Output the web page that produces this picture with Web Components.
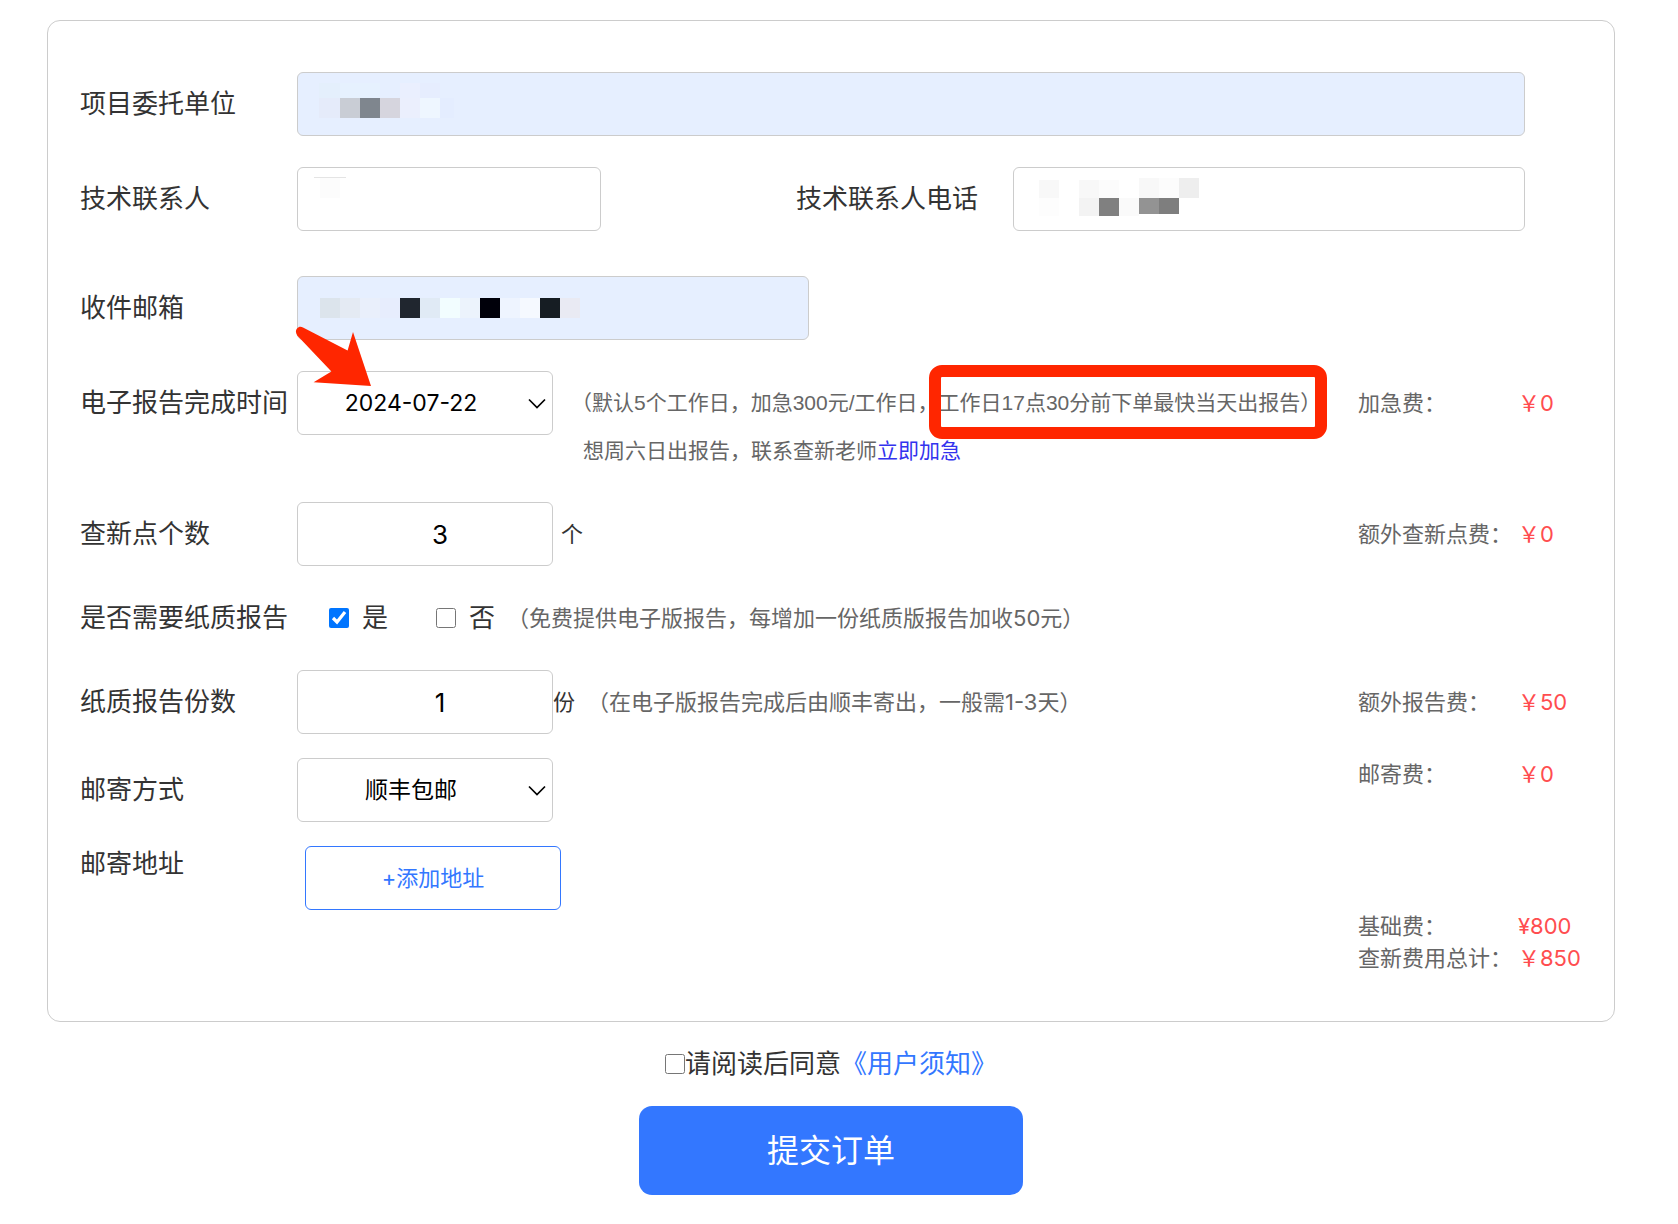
<!DOCTYPE html>
<html lang="zh-CN">
<head>
<meta charset="utf-8">
<meta name="viewport" content="width=device-width, initial-scale=1">
<title>提交订单</title>
<style>
  body {
    margin: 0;
    background: #fff;
    color: #333;
    font: 22px/32px Inter, "Noto Sans CJK SC", sans-serif;
    --line: #ccc;
    --blue: #3377ff;
    --mark: #ff2600;
    --label-size: 26px;
    --label-col: 217px;
  }
  order-page { padding: 20px 63px 28px 47px; }
  .gap-s { margin-top: 20px; }
  .gap-m { margin-top: 24px; }
  .gap-l { margin-top: 31px; }
  .gap-xl { margin-top: 45px; }
  .gap-xxl { margin-top: 27px; }
  .unit { margin-left: 8px; }
  .spaced { margin-left: 12px; }
  .spaced-l { margin-left: 18px; }
</style>
</head>
<body>
<order-page>
  <order-card>
    <form-row wide>
      <text-field label="项目委托单位" filled grow>
        <mosaic-mask kind="company"></mosaic-mask>
      </text-field>
    </form-row>
    <form-row class="gap-l" wide>
      <text-field label="技术联系人" size="s"><mosaic-mask kind="contact"></mosaic-mask></text-field>
      <text-field label="技术联系人电话" size="l" type="tel"><mosaic-mask kind="phone"></mosaic-mask></text-field>
    </form-row>
    <form-row class="gap-xl">
      <text-field label="收件邮箱" size="l" type="email" filled><mosaic-mask kind="mail"></mosaic-mask></text-field>
    </form-row>
    <form-row class="gap-l">
      <select-field label="电子报告完成时间" value="2024-07-22"><pointer-arrow></pointer-arrow></select-field>
      <deadline-hint class="spaced-l"></deadline-hint>
      <fee-item slot="fee" label="加急费：" amount="￥0"></fee-item>
    </form-row>
    <form-row class="gap-xxl">
      <number-field label="查新点个数" value="3"></number-field>
      <hint-text class="unit" dark>个</hint-text>
      <fee-item slot="fee" label="额外查新点费：" amount="￥0"></fee-item>
    </form-row>
    <form-row class="gap-s">
      <paper-choice></paper-choice>
      <hint-text class="spaced">（免费提供电子版报告，每增加一份纸质版报告加收50元）</hint-text>
    </form-row>
    <form-row class="gap-s">
      <number-field label="纸质报告份数" value="1"></number-field>
      <hint-text dark>份</hint-text>
      <hint-text class="spaced">（在电子版报告完成后由顺丰寄出，一般需1-3天）</hint-text>
      <fee-item slot="fee" label="额外报告费：" amount="￥50"></fee-item>
    </form-row>
    <form-row class="gap-m">
      <select-field label="邮寄方式" value="顺丰包邮"></select-field>
      <fee-item slot="fee" label="邮寄费：" amount="￥0" compact></fee-item>
    </form-row>
    <form-row class="gap-m">
      <address-field></address-field>
    </form-row>
    <fee-summary>
      <fee-item label="基础费：" amount="¥800" compact></fee-item>
      <fee-item label="查新费用总计：" amount="￥850" compact></fee-item>
    </fee-summary>
  </order-card>
  <agree-line></agree-line>
  <submit-button>提交订单</submit-button>
</order-page>

<script>
const base = `
  *, *::before, *::after { box-sizing: border-box; }
  :host { box-sizing: border-box; }
  :host([hidden]) { display: none; }
`;
const fieldCss = base + `
  :host { display: flex; align-items: flex-start; position: relative; }
  label, .label {
    flex: none; width: var(--label-col); line-height: 64px;
    font-size: var(--label-size); white-space: nowrap;
  }
  .box { position: relative; width: 256px; height: 64px; }
  input, select {
    display: block; width: 100%; height: 64px; margin: 0;
    border: 1px solid var(--line); border-radius: 6px;
    background: #fff; color: #000; font: inherit; outline-color: var(--blue);
  }
`;

function define(name, render) {
  customElements.define(name, class extends HTMLElement {
    constructor() { super(); this.attachShadow({ mode: 'open' }); }
    connectedCallback() {
      const get = (key) => this.getAttribute(key) || '';
      const t = document.createElement('template');
      t.innerHTML = render(get, this);
      this.shadowRoot.replaceChildren(t.content.cloneNode(true));
    }
  });
}

define('order-page', () => `<style>${base}
  :host { display: flex; flex-direction: column; }
</style><slot></slot>`);

define('order-card', () => `<style>${base}
  :host { display: block; }
  form { padding: 51px 32px 47px; border: 1px solid var(--line); border-radius: 13px; }
</style><form><slot></slot></form>`);

define('form-row', () => `<style>${base}
  :host { display: flex; align-items: flex-start; }
  .main { flex: 1; display: flex; align-items: flex-start; min-width: 0; }
  :host([wide]) .main { justify-content: space-between; padding-right: 57px; }
</style><div class="main"><slot></slot></div><slot name="fee"></slot>`);

define('text-field', (get) => `<style>${fieldCss}
  :host([grow]) { flex: 1; }
  :host([grow]) .box { flex: 1; }
  :host([size="s"]) .box { width: 304px; }
  :host([size="l"]) .box { width: 512px; }
  :host([filled]) input { background: #e6efff; }
  input { padding: 0 22px; }
</style><label for="control">${get('label')}</label>
<div class="box"><input id="control" type="${get('type') || 'text'}"><slot></slot></div>`);

define('number-field', (get) => `<style>${fieldCss}
  input { appearance: textfield; padding: 0 0 0 30px; font-size: var(--label-size); text-align: center; }
  input::-webkit-inner-spin-button { appearance: none; margin: 0; }
</style><label for="control">${get('label')}</label>
<div class="box"><input id="control" type="number" value="${get('value')}"></div>`);

define('select-field', (get) => `<style>${fieldCss}
  select { appearance: none; padding: 0 28px 0 0; font-size: 23px; text-align: center; text-align-last: center; }
  .chevron { position: absolute; right: 7px; top: 27px; pointer-events: none; }
</style><label for="control">${get('label')}</label>
<div class="box"><select id="control"><option>${get('value')}</option></select>
<svg class="chevron" width="18" height="12" viewBox="0 0 18 12" fill="none" stroke="#000" stroke-width="1.7" aria-hidden="true"><path d="M1 1.5 9 9.5 17 1.5"/></svg><slot></slot></div>`);

define('pointer-arrow', () => `<style>${base}
  :host { position: absolute; left: -2px; top: -45px; pointer-events: none; }
  svg { display: block; }
</style><svg width="78" height="62" viewBox="0 0 78 62" aria-hidden="true">
<path fill="#ff2600" d="M8 1.6 52.6 24.6 58 6 76 60 18.6 56.2 36.4 45.6 2.2 9.4C-.2 6 1 2.400 3.600 1.200 5 .6 6.700.8 8 1.600Z"/></svg>`);

define('hint-text', () => `<style>${base}
  :host { display: block; line-height: 64px; color: #666; white-space: nowrap; }
  :host([dark]) { color: #333; }
</style><slot></slot>`);

define('deadline-hint', () => `<style>${base}
  :host {
    display: block; padding-top: 8px; color: #666; white-space: nowrap;
    font: 21px/48px "Liberation Sans", "Noto Sans CJK SC", sans-serif;
  }
  p { margin: 0; }
  .second { padding-left: 12px; }
  .mark { position: relative; display: inline-block; }
  .mark::after {
    content: ""; position: absolute; inset: -14px -6px -12px -10px;
    border: 12px solid var(--mark); border-radius: 13px; pointer-events: none;
  }
  a { color: #3333ee; text-decoration: none; }
</style>
<p>（默认5个工作日，加急300元/工作日，<span class="mark">工作日17点30分前下单最快当天出报告）</span></p>
<p class="second">想周六日出报告，联系查新老师<a href="#urgent">立即加急</a></p>`);

define('fee-item', (get) => `<style>${base}
  :host { display: flex; flex: none; width: 224px; line-height: 64px; white-space: nowrap; color: #666; }
  :host([compact]) { line-height: 32px; }
  .name { width: 160px; }
  .amount { color: #ff4d4f; }
</style><span class="name">${get('label')}</span><span class="amount">${get('amount')}</span>`);

define('fee-summary', () => `<style>${base}
  :host { display: flex; flex-direction: column; align-items: flex-end; }
</style><slot></slot>`);

define('paper-choice', () => `<style>${base}
  :host { display: block; }
  .group { display: flex; align-items: center; line-height: 64px; font-size: var(--label-size); white-space: nowrap; }
  .title { width: var(--label-col); }
  .options { display: flex; gap: 48px; padding-left: 32px; }
  label { display: flex; align-items: center; gap: 13px; }
  input { width: 20px; height: 20px; margin: 0; accent-color: #0075ff; }
</style>
<div class="group" role="group" aria-labelledby="title">
  <span class="title" id="title">是否需要纸质报告</span>
  <div class="options">
    <label><input type="checkbox" checked>是</label>
    <label><input type="checkbox">否</label>
  </div>
</div>`);

define('address-field', () => `<style>${base}
  :host { display: flex; align-items: flex-start; }
  .title { width: var(--label-col); font-size: var(--label-size); line-height: 36px; }
  button {
    width: 256px; height: 64px; margin: 0 0 0 8px; padding: 0;
    border: 1px solid var(--blue); border-radius: 6px;
    background: #fff; color: var(--blue); font: inherit;
  }
</style><span class="title" id="title">邮寄地址</span><button type="button" aria-describedby="title">+添加地址</button>`);

define('agree-line', () => `<style>${base}
  :host { display: flex; justify-content: center; margin-top: 24px; font-size: var(--label-size); line-height: 36px; }
  label { display: flex; align-items: center; }
  input { width: 20px; height: 20px; margin: 0; }
  a { color: var(--blue); text-decoration: none; }
</style><label><input type="checkbox">请阅读后同意</label><a href="#notice">《用户须知》</a>`);

define('submit-button', () => `<style>${base}
  :host { display: flex; justify-content: center; margin-top: 24px; }
  button {
    width: 384px; height: 89px; padding: 0; border: 0; border-radius: 13px;
    background: var(--blue); color: #fff; font: inherit; font-size: 32px;
  }
</style><button type="submit"><slot></slot></button>`);

/* Blocks that hide private values: [x, y, width, height, colour] */
const masks = {
  company: [[22,11,21,15,'#e4effc'],[43,11,40,15,'#e6f1fe'],[103,11,20,15,'#eaeffe'],[123,11,20,15,'#e6edfe'],
    [22,26,21,20,'#e5ebfa'],[43,26,20,20,'#c9cdd5'],[63,26,20,20,'#7f868e'],[83,26,20,20,'#d6d5de'],
    [103,26,20,20,'#ebeffd'],[123,26,20,20,'#eef6ff'],[143,26,14,20,'#e4edff']],
  contact: [[17,10,32,1,'#e4e4e4'],[23,11,20,20,'#fcfcfc']],
  phone: [[26,13,20,18,'#f8f8f8'],[66,13,20,18,'#f8f8f8'],[86,13,20,18,'#fcfcfc'],[126,11,20,20,'#f8f8f8'],
    [146,11,20,20,'#fcfcfc'],[166,11,20,20,'#eeeeee'],[26,31,20,18,'#fdfdfd'],[66,31,20,18,'#f3f3f3'],
    [86,31,20,18,'#808080'],[106,31,20,18,'#fafafa'],[126,31,20,16,'#939393'],[146,31,20,16,'#7e7e7e']],
  mail: ['#dce4ec','#e4eaf3','#e9effb','#e7edfd','#20262f','#e0eaf5','#f2fdff','#ecf3fc','#00000a','#eef4ff','#f5f9ff','#161d23','#e9eaf3']
    .map((c, i) => [23 + i * 20, 22, 20, 20, c])
};
define('mosaic-mask', (get) => `<style>${base}
  :host { position: absolute; left: 0; top: 0; pointer-events: none; }
  svg { display: block; }
</style><svg width="290" height="60" shape-rendering="crispEdges" aria-hidden="true">${
  masks[get('kind')].map(([x, y, w, h, c]) => `<rect x="${x}" y="${y}" width="${w}" height="${h}" fill="${c}"/>`).join('')
}</svg>`);
</script>
</body>
</html>
